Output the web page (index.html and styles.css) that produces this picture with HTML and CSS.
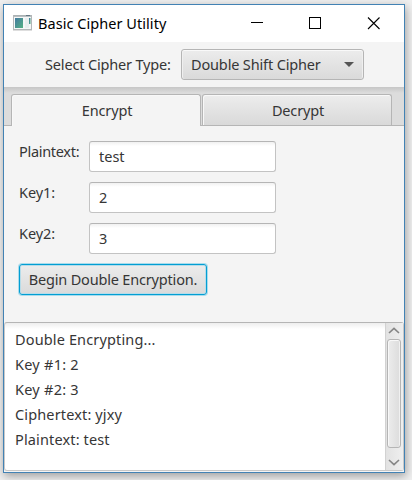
FILE: index.html
```html
<!DOCTYPE html>
<html lang="en">
<head>
<meta charset="utf-8">
<title>Basic Cipher Utility</title>
<link rel="stylesheet" href="styles.css">
</head>
<body>
<main class="window">
  <header class="titlebar">
    <svg class="app-icon" width="19" height="16" viewBox="0 0 19 16">
      <defs><linearGradient id="g" x1="0" y1="0" x2="1" y2="1"><stop offset="0" stop-color="#4279a0"/><stop offset="1" stop-color="#55b184"/></linearGradient></defs>
      <rect x=".5" y=".5" width="18" height="14" fill="#f5f7f7" stroke="#b3b7b9"/>
      <path d="M1 1.2h17" stroke="#9ba4a9"/>
      <path d="M13 .5h4" stroke="#647783"/>
      <rect x="2" y="3" width="8" height="10" fill="url(#g)"/>
      <rect x="12" y="3" width="4" height="10" fill="#e8eeef"/>
      <rect x="16" y="3" width="1.5" height="6" fill="url(#g)"/>
      <path d="M0 15.5h19" stroke="#dedede"/>
    </svg>
    <span class="title">Basic Cipher Utility</span>
    <svg class="controls" width="130" height="13" viewBox="0 0 130 13" fill="none" stroke="#000">
      <path d="M0 5.500h12"/>
      <rect x="58.5" y=".5" width="11" height="11"/>
      <path d="M117 .5l11.500 11.500M128.500 .5l-11.500 11.500" stroke-width="1.100"/>
    </svg>
  </header>
  <section class="chooser">
    <span class="caption">Select Cipher Type:</span>
    <div class="combo"><span>Double Shift Cipher</span><i class="arrow"></i></div>
  </section>
  <nav class="tabs">
    <div class="tab active"><span>Encrypt</span></div>
    <div class="tab"><span>Decrypt</span></div>
  </nav>
  <section class="form">
    <div class="row"><label class="long">Plaintext:</label><div class="field">test</div></div>
    <div class="row"><label>Key1:</label><div class="field">2</div></div>
    <div class="row"><label>Key2:</label><div class="field">3</div></div>
    <button class="begin"><span>Begin Double Encryption.</span></button>
  </section>
  <section class="output">
    <div class="log">
      <p>Double Encrypting...</p>
      <p class="wide">Key #1: 2</p>
      <p class="wide">Key #2: 3</p>
      <p>Ciphertext: yjxy</p>
      <p>Plaintext: test</p>
    </div>
    <div class="scrollbar">
      <svg width="12" height="7" viewBox="0 0 12 7" fill="none" stroke="#858585" stroke-width="1.600"><path d="M1 6l5-4.700 5 4.700"/></svg>
      <div class="thumb"></div>
      <svg width="12" height="7" viewBox="0 0 12 7" fill="none" stroke="#858585" stroke-width="1.600"><path d="M1 1l5 4.700 5-4.700"/></svg>
    </div>
  </section>
</main>
</body>
</html>
```
FILE: styles.css
```css
* { box-sizing: border-box; }
body {
  margin: 0;
  height: 480px;
  overflow: hidden;
  padding: 4px 0 0 3px;
  background: #f0f0f0;
  font: 14.5px/20px "Noto Sans", "Open Sans", sans-serif;
  color: #363636;
}
.window {
  width: 402px;
  height: 469px;
  border: 1px solid #4282b4;
  background: #f4f4f4;
  display: flex;
  flex-direction: column;
  box-shadow: 1px 3px 9px rgba(0, 0, 0, .35);
}
span, label, p { white-space: nowrap; }
.titlebar {
  height: 37px;
  flex: none;
  display: flex;
  align-items: center;
  background: #fff;
  color: #000;
  padding-left: 9px;
}
.app-icon { margin-bottom: 1px; }
.title { width: 219px; padding: 0 0 2px 6px; letter-spacing: .05px; }
.controls { flex: none; }
.chooser {
  height: 45px;
  flex: none;
  display: flex;
  align-items: center;
  padding-left: 41px;
}
.caption { width: 136px; padding-bottom: 2px; letter-spacing: -.16px; }
.combo {
  width: 183px;
  height: 31px;
  border: 1px solid #b5b5b5;
  border-radius: 3px;
  background: linear-gradient(#ececec, #dadada);
  box-shadow: inset 0 1px #f9f9f9, inset 1px 0 #efefef, inset -1px 0 #efefef;
  display: flex;
  align-items: center;
  justify-content: space-between;
  padding: 0 9px;
}
.combo span { letter-spacing: -.15px; padding-bottom: 2px; }
.arrow {
  border: 5px solid transparent;
  border-top-color: #555;
  border-bottom: 0;
}
.tabs {
  height: 39px;
  flex: none;
  display: flex;
  align-items: flex-end;
  gap: 1px;
  padding: 7px 0 0 7px;
  border-bottom: 1px solid #b5b5b5;
  background: linear-gradient(#c6c6c6, #dcdcdc 6px);
}
.tab {
  width: 190px;
  height: 31px;
  display: flex;
  align-items: center;
  justify-content: center;
  padding: 0 0 1px 2px;
  border: 1px solid #b5b5b5;
  border-bottom: 0;
  border-radius: 3px 3px 0 0;
  letter-spacing: -.15px;
  background: linear-gradient(#ededed, #d9d9d9);
  box-shadow: inset 1px 1px #f8f8f8;
}
.tab.active { height: 32px; margin-bottom: -1px; padding-bottom: 2px; background: #f4f4f4; }
.form {
  height: 196px;
  flex: none;
  padding: 15px 0 0 15px;
  display: flex;
  flex-direction: column;
  align-items: flex-start;
  gap: 10px;
}
.row { display: flex; height: 31px; }
.row label { width: 70px; letter-spacing: -.1px; }
.row .long { letter-spacing: -.3px; }
.field {
  width: 187px;
  height: 31px;
  padding: 4px 9px;
  border: 1px solid #c3c3c3;
  border-top-color: #b5b5b5;
  border-radius: 3px;
  background: linear-gradient(#f1f1f1, #fff 4px);
}
.begin {
  width: 188px;
  height: 31px;
  padding: 0 0 2px;
  border: 1px solid #039ed3;
  border-radius: 3px;
  background: linear-gradient(#ececec, #dadada);
  box-shadow: inset 0 0 0 1px #b7dce9, 0 0 0 1px #a9dcec;
  font: inherit;
  color: inherit;
  letter-spacing: -.18px;
}
.output {
  height: 149px;
  display: flex;
  border: 1px solid #c8c8c8;
  border-top-color: #b5b5b5;
  border-radius: 3px;
  background: linear-gradient(#eee, #fff 6px);
}
.log { flex: 1; padding: 4px 0 0 10px; line-height: 25px; letter-spacing: .14px; }
.log p { margin: 0; }
.log .wide { letter-spacing: .25px; }
.scrollbar {
  width: 18px;
  border-left: 1px solid #d2d2d2;
  background: linear-gradient(90deg, #e2e2e2, #efefef);
  display: flex;
  flex-direction: column;
  align-items: center;
  justify-content: space-between;
  padding: 4px 1px 4px 0;
}
.thumb {
  width: 14px;
  height: 109px;
  margin: 0 0 7px;
  border: 1px solid #b5b5b5;
  border-radius: 3px;
  background: linear-gradient(90deg, #ececec, #dcdcdc);
  box-shadow: inset 1px 1px #f8f8f8, inset -1px 0 #f0f0f0;
}
```
